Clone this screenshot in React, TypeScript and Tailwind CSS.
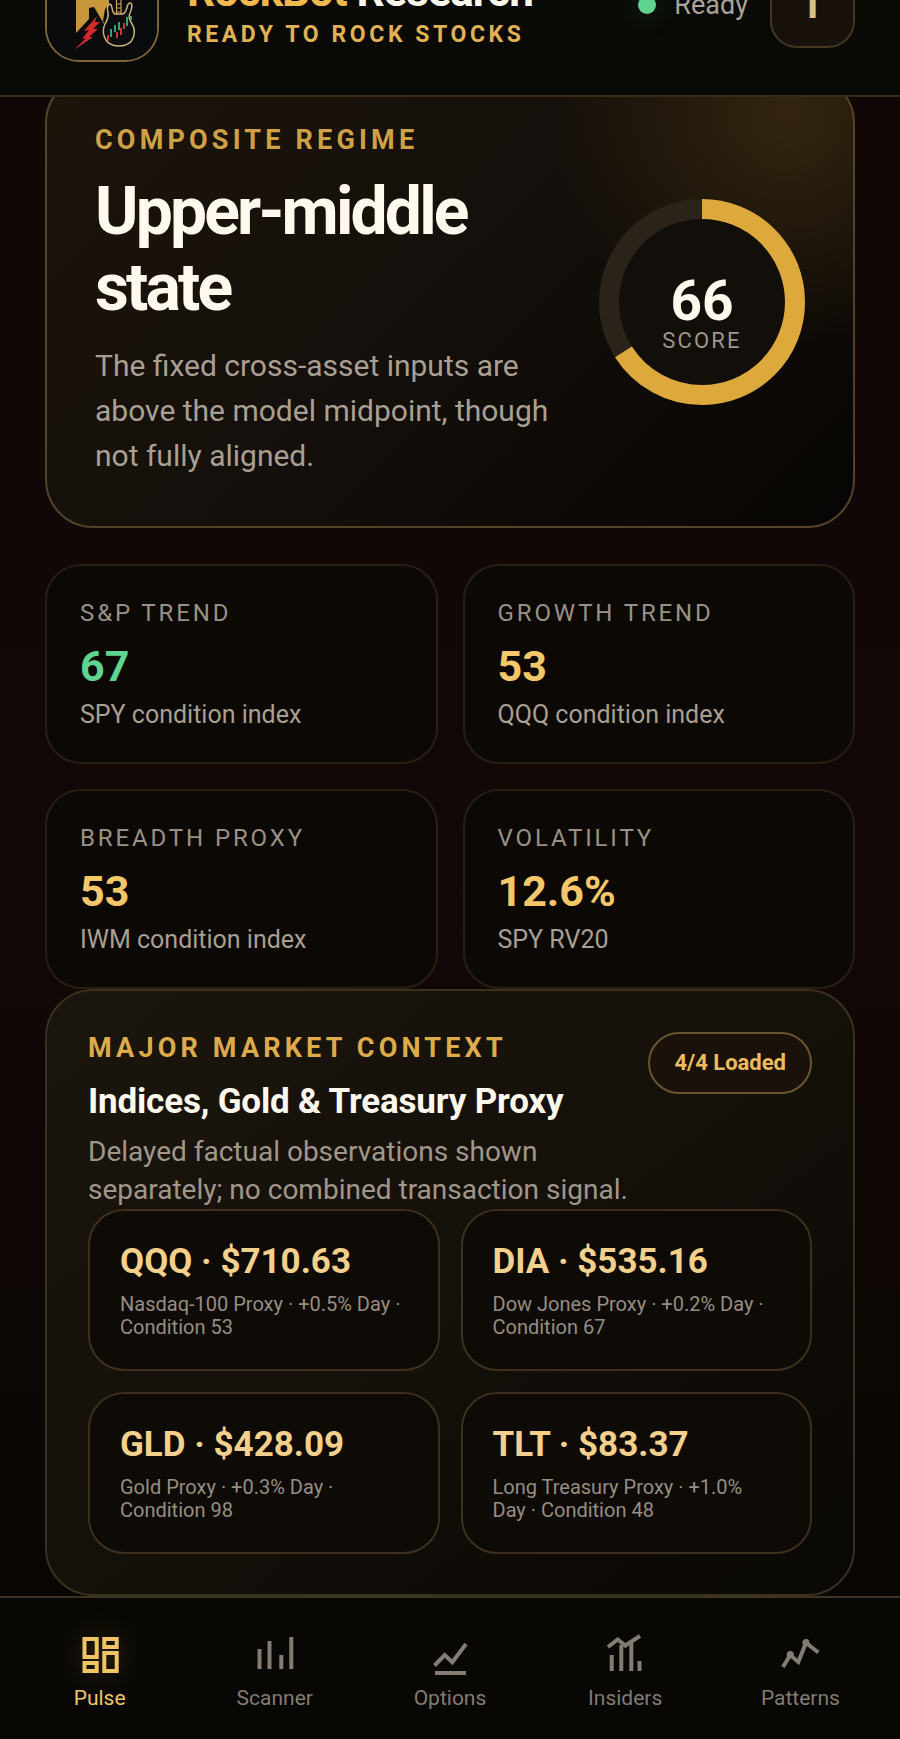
import type { ReactNode } from "react";

const stats = [
  { label: "S&P Trend", value: "67", note: "SPY condition index", tone: "text-[#5fd38f]" },
  { label: "Growth Trend", value: "53", note: "QQQ condition index", tone: "text-[#f5c76b]" },
  { label: "Breadth Proxy", value: "53", note: "IWM condition index", tone: "text-[#f5c76b]" },
  { label: "Volatility", value: "12.6%", note: "SPY RV20", tone: "text-[#f5c76b]" },
];

const markets = [
  { symbol: "QQQ", price: "$710.63", note: "Nasdaq-100 Proxy · +0.5% Day · Condition 53" },
  { symbol: "DIA", price: "$535.16", note: "Dow Jones Proxy · +0.2% Day · Condition 67" },
  { symbol: "GLD", price: "$428.09", note: "Gold Proxy · +0.3% Day · Condition 98" },
  { symbol: "TLT", price: "$83.37", note: "Long Treasury Proxy · +1.0% Day · Condition 48" },
];

const tabs: { name: string; icon: ReactNode }[] = [
  {
    name: "Pulse",
    icon: (
      <>
        <rect x="8.5" y="8" width="12.2" height="18" />
        <rect x="28.3" y="8" width="12.4" height="8" />
        <rect x="8.5" y="32" width="12.2" height="8" />
        <rect x="28.3" y="22" width="12.4" height="18" />
      </>
    ),
  },
  { name: "Scanner", icon: <path d="M8.5 18v20M18.5 10v28M30.3 24v14M40.3 6v32" /> },
  { name: "Options", icon: <path d="M8.5 34.5 18.7 24l7.6 7.2L40 13M9 42h31" /> },
  {
    name: "Insiders",
    icon: <path d="M7 16l9.7-7.5 7.6 6L39 5M10.7 24v16M20.3 14v26M30.3 11v29M38.5 30v10" />,
  },
  {
    name: "Patterns",
    icon: (
      <>
        <path d="M7 36l7.3-12 8 7L30 11.7l12.3 9.8" />
        <circle cx="14.3" cy="23.7" r="1.6" />
        <circle cx="30" cy="11.7" r="1.6" />
      </>
    ),
  },
];

function Logo() {
  return (
    <svg viewBox="0 0 110 110" className="size-full" aria-hidden="true">
      <rect width="110" height="110" fill="#090b0d" />
      <path d="M29 20h33v34l-4 5-2 12 5 10-14-24-5 1v11L29 83z" fill="#c9973b" />
      <path d="M50 66 37 81l5-1-7 9 4-1-12 12 19-13-4 0 9-8-5 0 7-7-5 0z" fill="#d22b2b" />
      {/* guitar */}
      <path
        d="M63 54c-3 1-3 5-2 9 1 5-1 7-3 11-3 6-3 22 14 22s17-16 13-22c-2-4-4-6-2-11 2-4 3-10 0-10-4 0-2 9-7 11h-8c-4-2-2-9-5-10z"
        fill="#0b0d10"
        stroke="#c9b07c"
        strokeWidth="1.5"
      />
      <path d="M69.5 20v45M74 20v45M69 54h5M69 58h5M69 62h5" stroke="#c9a05a" strokeWidth="1.2" />
      <path d="M64 79v8M68 75v7M72 72v8M80 67v9M84 66v4" stroke="#2fa671" strokeWidth="2" />
      <path d="M61 85v6M70 82v6M74 78v7M77 73v6" stroke="#c9352f" strokeWidth="2" />
    </svg>
  );
}

function ScoreRing({ score }: { score: number }) {
  return (
    <div className="relative size-[206px] shrink-0">
      <svg viewBox="0 0 206 206" className="size-full -rotate-90" aria-hidden="true">
        <circle cx="103" cy="103" r="93" fill="#120e09" stroke="#2b2319" strokeWidth="20" />
        <circle
          cx="103"
          cy="103"
          r="93"
          fill="none"
          stroke="#dda93d"
          strokeWidth="20"
          pathLength="100"
          strokeDasharray={`${score} 100`}
        />
      </svg>
      <div className="absolute inset-0 flex flex-col items-center justify-center pt-6">
        <strong className="text-[55px] leading-[54px] font-bold text-[#fff8ec]">{score}</strong>
        <span className="text-[22px] leading-[26px] tracking-widest text-[#a0978a]">SCORE</span>
      </div>
    </div>
  );
}

export default function App() {
  return (
    <div className="flex min-h-screen flex-col bg-linear-to-b from-[#110606] via-[#130808] to-[#070502] font-[Roboto,sans-serif] text-[#fff8ec]">
      <header className="relative z-10 flex h-[97px] flex-col justify-end overflow-hidden border-b-2 border-[#352b18] bg-[#090906] px-[45px] pb-[33px]">
        <div className="flex h-[114px] shrink-0 items-center">
          <div className="size-[114px] shrink-0 overflow-hidden rounded-[34px] border-2 border-[#7d6539]">
            <Logo />
          </div>
          <div className="ml-7 flex-1 pt-2">
            <p className="text-[44px] leading-[48px] font-bold tracking-tight whitespace-nowrap">
              <span className="text-[#f0b94e]">RockBot</span> Research
            </p>
            <p className="mt-1 text-[23px] leading-8 font-bold tracking-[0.155em] whitespace-nowrap text-[#e0b253]">
              READY TO ROCK STOCKS
            </p>
          </div>
          <div className="flex items-center gap-[18px] text-[27px] leading-8 text-[#aaa397]">
            <span className="size-[18px] rounded-full bg-[#5fd38f] shadow-[0_0_28px_rgba(95,211,143,0.3)]" />
            Ready
          </div>
          <button
            type="button"
            aria-label="Account"
            className="ml-[22px] size-[85px] rounded-[27px] border-2 border-[#443820] bg-[#17100b] text-[40px] leading-none font-bold text-[#dcbf82]"
          >
            I
          </button>
        </div>
      </header>

      <main className="flex-1 px-[45px]">
        {/* HERO */}
        <section className="-mt-[22px] flex items-center justify-between rounded-[48px] border-2 border-[#54432a] bg-[radial-gradient(circle_at_92%_8%,#33250f_0%,transparent_28%),linear-gradient(135deg,#1c140b_0%,#15100b_45%,#070503_100%)] p-12">
          <div className="flex-1">
            <p className="text-[27px] leading-[31px] font-bold tracking-[0.155em] text-[#cfa146]">
              COMPOSITE REGIME
            </p>
            <h1 className="mt-[18px] text-[66px] leading-[76px] font-bold tracking-[-0.043em]">
              Upper-middle state
            </h1>
            <p className="mt-[17px] text-[30px] leading-[45px] text-[#a99f92]">
              The fixed cross-asset inputs are above the model midpoint, though not fully aligned.
            </p>
          </div>
          <ScoreRing score={66} />
        </section>

        {/* STATS */}
        <section className="mt-9 grid grid-cols-2 gap-[25px]">
          {stats.map((s) => (
            <div
              key={s.label}
              className="rounded-[36px] border-2 border-[#281f13] bg-[#0c0804] p-[33px]"
            >
              <p className="text-[24px] leading-7 tracking-[0.12em] text-[#9a9185] uppercase">{s.label}</p>
              <p className={`mt-[14px] text-[43px] leading-[50px] font-bold ${s.tone}`}>{s.value}</p>
              <p className="mt-[9px] text-[25px] leading-[29px] text-[#a99f92]">{s.note}</p>
            </div>
          ))}
        </section>

        {/* MARKET CONTEXT */}
        <section className="rounded-[48px] border-2 border-[#3a301e] bg-linear-to-br from-[#1b160d] via-[#14100a] to-[#0a0805] px-[41px] pt-[41px] pb-10">
          <div className="flex items-start justify-between">
            <div className="max-w-[540px]">
              <p className="text-[27px] leading-8 font-bold tracking-[0.155em] text-[#ddab4b]">
                MAJOR MARKET CONTEXT
              </p>
              <h2 className="mt-[17px] text-[35px] leading-[42px] font-bold tracking-[-0.005em]">
                Indices, Gold &amp; Treasury Proxy
              </h2>
              <p className="mt-[10px] text-[28px] leading-[38px] text-[#a0978a]">
                Delayed factual observations shown separately; no combined transaction signal.
              </p>
            </div>
            <span className="rounded-full border-2 border-[#6a5430] bg-[#1a110a] px-6 py-4 text-[22px] leading-[26px] font-bold whitespace-nowrap text-[#ecbd5f]">
              4/4 Loaded
            </span>
          </div>
          <div className="grid grid-cols-2 gap-[21px]">
            {markets.map((m) => (
              <div
                key={m.symbol}
                className="rounded-[36px] border-2 border-[#3e301c] bg-[#0e0a05] py-[30px] pr-9 pl-[30px]"
              >
                <h3 className="text-[35px] leading-[41px] font-bold text-[#f3d08b]">
                  {m.symbol} · {m.price}
                </h3>
                <p className="mt-[11px] text-[20px] leading-[23px] text-[#968e82]">{m.note}</p>
              </div>
            ))}
          </div>
        </section>
      </main>

      <nav className="grid grid-cols-5 border-t-2 border-[#3d3422] bg-[#080704] px-3 pt-[33px] pb-7">
        {tabs.map((tab, i) => (
          <a
            key={tab.name}
            href={`#${tab.name.toLowerCase()}`}
            aria-current={i === 0 ? "page" : undefined}
            className={`flex flex-col items-center gap-[6px] text-[21px] leading-[26px] ${
              i === 0 ? "text-[#f2c468]" : "text-[#827c72]"
            }`}
          >
            <svg
              viewBox="0 0 48 48"
              fill="none"
              stroke="currentColor"
              strokeWidth="4"
              aria-hidden="true"
              className={`size-12 ${i === 0 ? "drop-shadow-[0_0_14px_rgba(240,190,80,0.25)]" : ""}`}
            >
              {tab.icon}
            </svg>
            {tab.name}
          </a>
        ))}
      </nav>
    </div>
  );
}
